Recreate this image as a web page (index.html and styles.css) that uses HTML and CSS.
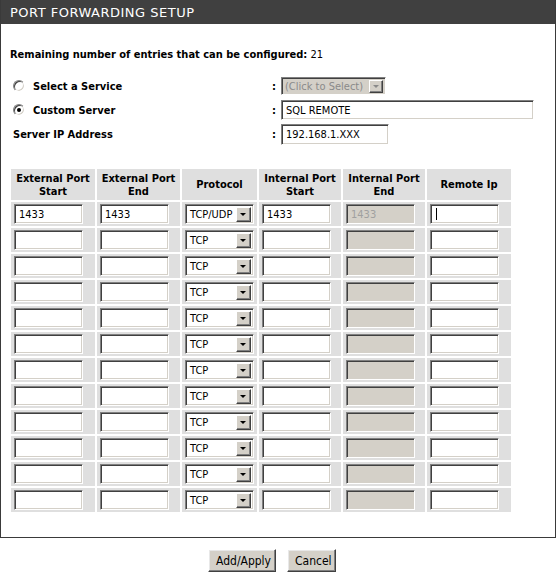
FILE: index.html
```html
<!DOCTYPE html>
<html>
<head>
<meta charset="utf-8">
<link rel="stylesheet" href="styles.css">
</head>
<body>
<div class="panel">
  <div class="title">PORT FORWARDING SETUP</div>
  <div class="content">
    <p class="remaining"><b>Remaining number of entries that can be configured:</b> 21</p>
    <div class="form">
      <div class="frow">
        <label class="lbl"><span class="radio"></span>Select a Service</label>
        <span class="colon">:</span>
        <span class="sel sel-dis sel-top"><span class="val">(Click to Select)</span><span class="btn"><i></i></span></span>
      </div>
      <div class="frow">
        <label class="lbl"><span class="radio on"></span>Custom Server</label>
        <span class="colon">:</span>
        <input class="inp inp-wide" value="SQL REMOTE">
      </div>
      <div class="frow">
        <label class="lbl lbl-plain">Server IP Address</label>
        <span class="colon">:</span>
        <input class="inp inp-ip" value="192.168.1.XXX">
      </div>
    </div>
    <table class="grid">
      <thead>
        <tr>
          <th class="c1">External Port<br>Start</th>
          <th class="c2">External Port<br>End</th>
          <th class="c3">Protocol</th>
          <th class="c4">Internal Port<br>Start</th>
          <th class="c5">Internal Port<br>End</th>
          <th class="c6">Remote Ip</th>
        </tr>
      </thead>
      <tbody id="rows">
        <tr>
          <td><input class="inp cell" value="1433"></td>
          <td><input class="inp cell" value="1433"></td>
          <td><span class="sel"><span class="val">TCP/UDP</span><span class="btn"><i></i></span></span></td>
          <td><input class="inp cell" value="1433"></td>
          <td><input class="inp cell dis" value="1433" disabled></td>
          <td><span class="inp cell caret"><span></span></span></td>
        </tr>
      </tbody>
    </table>
  </div>
</div>
<div class="actions">
  <button class="b b-add">Add/Apply</button>
  <button class="b b-cancel">Cancel</button>
</div>
<script>
  var tb = document.getElementById('rows');
  for (var i = 0; i < 11; i++) {
    var tr = document.createElement('tr');
    tr.innerHTML = '<td><input class="inp cell"></td><td><input class="inp cell"></td>' +
      '<td><span class="sel"><span class="val">TCP</span><span class="btn"><i></i></span></span></td>' +
      '<td><input class="inp cell"></td><td><input class="inp cell dis" disabled></td><td><input class="inp cell"></td>';
    tb.appendChild(tr);
  }
</script>
</body>
</html>
```
FILE: styles.css
```css
* { box-sizing: border-box; }
body {
  margin: 0;
  width: 556px;
  background: #fff;
  font-family: "DejaVu Sans Condensed", "DejaVu Sans", sans-serif;
  font-size: 11px;
  color: #000;
}
.panel {
  border-left: 1px solid #3a3a3a;
  border-right: 1px solid #3a3a3a;
  border-bottom: 1px solid #3a3a3a;
  height: 538px;
}
.title {
  height: 24px;
  background: #404040;
  color: #fff;
  font-family: "DejaVu Sans", sans-serif;
  font-size: 13px;
  line-height: 25px;
  padding-left: 9px;
  letter-spacing: 0.5px;
}
.content { padding: 0 0 0 9px; }
.remaining {
  margin: 0;
  padding-top: 24px;
  height: 50px;
  line-height: 14px;
}
.form { display: flex; flex-direction: column; }
.frow {
  display: flex;
  align-items: center;
  height: 24px;
}
.lbl {
  width: 262px;
  display: flex;
  align-items: center;
  font-weight: bold;
  padding-left: 3px;
}
.lbl-plain { padding-left: 3px; }
.radio {
  width: 12px;
  height: 12px;
  border-radius: 50%;
  border: 1px solid;
  border-color: #808080 #fff #fff #808080;
  box-shadow: inset 1px 1px #404040, inset -1px -1px #d4d0c8;
  background: #fff;
  margin-right: 8px;
  position: relative;
}
.radio.on::after {
  content: "";
  position: absolute;
  left: 3px; top: 3px;
  width: 4px; height: 4px;
  border-radius: 50%;
  background: #000;
}
.colon { width: 9px; font-weight: bold; }
.inp {
  display: inline-block;
  height: 20px;
  border: 1px solid;
  border-color: #808080 #fff #fff #808080;
  box-shadow: inset 1px 1px #404040, inset -1px -1px #d4d0c8;
  background: #fff;
  font-family: "DejaVu Sans Condensed", "DejaVu Sans", sans-serif;
  font-size: 11px;
  padding: 1px 4px 0;
  color: #000;
  outline: none;
  vertical-align: middle;
}
.inp-wide { width: 253px; }
.inp-ip { width: 108px; height: 21px; }
.sel {
  display: inline-flex;
  align-items: center;
  justify-content: space-between;
  width: 69px;
  height: 20px;
  border: 1px solid;
  border-color: #808080 #fff #fff #808080;
  box-shadow: inset 1px 1px #404040, inset -1px -1px #d4d0c8;
  background: #fff;
  padding: 2px 2px 2px 4px;
  vertical-align: middle;
}
.sel .btn {
  width: 15px;
  height: 15px;
  background: #d4d0c8;
  border: 1px solid;
  border-color: #fff #404040 #404040 #fff;
  box-shadow: inset -1px -1px #808080;
  display: flex;
  align-items: center;
  justify-content: center;
}
.sel .btn i {
  width: 0; height: 0;
  border-left: 3px solid transparent;
  border-right: 3px solid transparent;
  border-top: 3px solid #000;
  margin: 1px 1px 0 0;
}
.sel-top { width: 105px; height: 18px; padding: 1px 2px 1px 3px; }
.sel-dis { background: #d4d0c8; color: #8a8a8a; }
.sel-dis .btn i { border-top-color: #8a8a8a; }
.sel-dis .btn { width: 14px; height: 13px; }
.grid {
  margin-top: 21px;
  border-collapse: separate;
  border-spacing: 2px;
  margin-left: -1px;
}
.grid th, .grid td {
  background: #dfdfdf;
  padding: 0;
}
.grid th {
  height: 31px;
  font-weight: bold;
  line-height: 13px;
  text-align: center;
}
.grid td {
  height: 24px;
  padding-left: 3px;
  vertical-align: middle;
}
.c1 { width: 84px; }
.c2 { width: 83px; }
.c3 { width: 75px; }
.c4 { width: 82px; }
.c5 { width: 82px; }
.c6 { width: 84px; }
.inp.cell { width: 69px; height: 20px; }
.inp.dis { background: #d4d0c8; color: #a0a0a0; }
.caret { position: relative; }
.caret span {
  position: absolute;
  left: 5px; top: 3px;
  width: 1px; height: 12px;
  background: #000;
}
.actions {
  display: flex;
  justify-content: center;
  gap: 11px;
  padding-top: 11px;
  padding-right: 12px;
}
.b {
  height: 23px;
  background: #d4d0c8;
  border: 1px solid;
  border-color: #fff #404040 #404040 #fff;
  box-shadow: inset -1px -1px #808080, inset 1px 1px #e8e8e8;
  font-family: "DejaVu Sans Condensed", "DejaVu Sans", sans-serif;
  font-size: 12px;
  color: #000;
  padding: 0 7px;
}
.b-add { width: 68px; }
.b-cancel { width: 49px; }
```
